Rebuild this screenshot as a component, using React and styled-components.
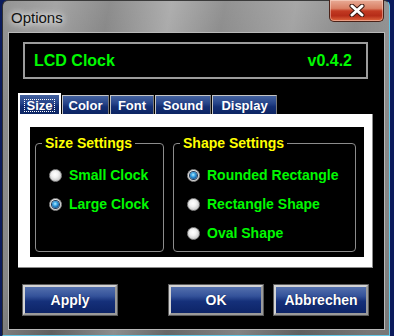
import React from "react";
import styled, { createGlobalStyle, css } from "styled-components";

const Global = createGlobalStyle`
  html, body { margin: 0; padding: 0; background: #0b1b5c; }
  body { width: 394px; height: 336px; overflow: hidden; font-family: "Liberation Sans", Arial, sans-serif; }
  * { box-sizing: border-box; }
`;

const Window = styled.div`
  width: 388px;
  height: 336px;
  margin-left: 2px;
  display: flex;
  flex-direction: column;
  padding: 0 4px 5px 5px;
  border-left: 1px solid #2f2f2f;
  border-top: 1px solid #3a3a3a;
  border-right: 1px solid #62c6e6;
  border-bottom: 1px solid #62c6e6;
  border-radius: 6px 6px 0 0;
  background:
    linear-gradient(100deg, rgba(255,255,255,0.08) 0%, rgba(255,255,255,0.22) 12%, rgba(255,255,255,0.02) 24%, rgba(255,255,255,0.3) 38%, rgba(255,255,255,0.06) 50%, rgba(255,255,255,0.24) 66%, rgba(255,255,255,0.02) 80%, rgba(255,255,255,0.16) 95%),
    linear-gradient(180deg, #8c8c8c 0%, #7a7a7a 30%, #6c6c6c 70%, #5c5c5c 100%);
`;

const TitleBar = styled.div`
  height: 31px;
  display: flex;
  justify-content: space-between;
  align-items: flex-start;
`;

const Title = styled.div`
  padding: 8px 0 0 3px;
  font-size: 15px;
  line-height: 17px;
  color: #111;
  text-shadow: 0 0 6px rgba(255,255,255,0.95), 0 0 10px rgba(255,255,255,0.8);
`;

const CloseButton = styled.div`
  width: 55px;
  height: 22px;
  margin-top: -1px;
  margin-right: 1px;
  border: 1px solid #4a2218;
  border-top: none;
  border-radius: 0 0 5px 5px;
  background: linear-gradient(180deg, #e8ab96 0%, #d97f64 40%, #c23a22 52%, #b52c18 75%, #e0683f 100%);
  box-shadow: inset 0 0 0 1px rgba(255,230,220,0.45);
  display: flex;
  align-items: center;
  justify-content: center;
`;

const Client = styled.div`
  height: 298px;
  background: #000;
  border: 1px solid #b8b8b8;
  display: flex;
  flex-direction: column;
  padding: 9px 0 0 9px;
`;

const Lcd = styled.div`
  width: 345px;
  height: 37px;
  margin-left: 5px;
  border: 2px solid #9c9c9c;
  display: flex;
  align-items: center;
  justify-content: space-between;
  padding: 0 14px 0 9px;
  color: #00fa00;
  font-weight: bold;
  font-size: 16px;
`;

const TabRow = styled.div`
  margin-top: 14px;
  height: 21px;
  display: flex;
  align-items: flex-end;
  gap: 1px;
`;

const Tab = styled.div`
  width: ${(p) => p.$w}px;
  height: 19px;
  display: flex;
  align-items: center;
  justify-content: center;
  color: #fff;
  font-weight: bold;
  font-size: 13px;
  background: linear-gradient(180deg, #44629f 0%, #27458a 40%, #142f74 60%, #0c2463 100%);
  border: 1px solid #c4c4c4;
  border-bottom: none;
  border-right-color: #7a7a7a;
  ${(p) =>
    p.$active &&
    css`
      height: 21px;
      border: 2px solid #fff;
      border-bottom: none;
      padding-top: 1px;
    `}
`;

const Focus = styled.span`
  border: 1px dotted #fff;
  padding: 0 1px;
  line-height: 11px;
`;

const Panel = styled.div`
  width: 355px;
  height: 154px;
  background: #fff;
  border-right: 1px solid #8a8a8a;
  border-bottom: 1px solid #8a8a8a;
  padding: 13px 8px 10px 12px;
  display: flex;
`;

const PanelInner = styled.div`
  flex: 1;
  background: #000;
  display: flex;
  gap: 9px;
  padding: 16px 8px 5px 5px;
`;

const Group = styled.div`
  position: relative;
  width: ${(p) => p.$w}px;
  height: 109px;
  border: 1px solid #8c8c8c;
  border-radius: 4px;
  display: flex;
  flex-direction: column;
  gap: 13px;
  padding: 23px 0 0 13px;
`;

const GroupTitle = styled.div`
  position: absolute;
  top: -9px;
  left: 6px;
  padding: 0 3px;
  background: #000;
  color: #ffff00;
  font-weight: bold;
  font-size: 14px;
  line-height: 16px;
`;

const RadioRow = styled.div`
  height: 16px;
  display: flex;
  align-items: center;
  gap: 7px;
  color: #00fa00;
  font-weight: bold;
  font-size: 14px;
  white-space: nowrap;
`;

const RadioDot = styled.span`
  position: relative;
  width: 13px;
  height: 13px;
  flex: none;
  border-radius: 50%;
  border: 1px solid #8a8a8a;
  background: radial-gradient(circle at 45% 40%, #ffffff 0%, #f2f2f2 35%, #c9c9c9 75%, #a9a9a9 100%);
  ${(p) =>
    p.$checked &&
    css`
      &::after {
        content: "";
        position: absolute;
        left: 2px;
        top: 2px;
        width: 7px;
        height: 7px;
        border-radius: 50%;
        background: radial-gradient(circle at 45% 40%, #b8ecff 0%, #3aa6e6 35%, #1563a6 65%, #0a2c52 100%);
        box-shadow: 0 0 0 1px #203a58;
      }
    `}
`;

const ButtonRow = styled.div`
  margin-top: 17px;
  padding-left: 5px;
  display: flex;
`;

const Button = styled.button`
  width: 94px;
  height: 30px;
  margin-left: ${(p) => p.$ml || 0}px;
  padding: 0;
  border: 2px solid #d4d4d4;
  border-right-color: #9a9a9a;
  border-bottom-color: #9a9a9a;
  box-shadow: 0 0 0 1px #5c5c5c;
  background: linear-gradient(180deg, #5470ad 0%, #34529a 35%, #15307a 55%, #0d2467 100%);
  color: #fff;
  font-family: "Liberation Sans", Arial, sans-serif;
  font-weight: bold;
  font-size: 14px;
  text-shadow: 0 0 1px #001040;
`;

const CloseIcon = () => (
  <svg width="16" height="13" viewBox="0 0 16 13">
    <path d="M3 2 L13 11 M13 2 L3 11" stroke="#3a1810" strokeWidth="5" strokeLinecap="round" />
    <path d="M3 2 L13 11 M13 2 L3 11" stroke="#ffffff" strokeWidth="3" strokeLinecap="round" />
  </svg>
);

const Radio = ({ checked, children }) => (
  <RadioRow>
    <RadioDot $checked={checked} />
    {children}
  </RadioRow>
);

export default function App() {
  return (
    <>
      <Global />
      <Window>
        <TitleBar>
          <Title>Options</Title>
          <CloseButton>
            <CloseIcon />
          </CloseButton>
        </TitleBar>
        <Client>
          <Lcd>
            <span>LCD Clock</span>
            <span>v0.4.2</span>
          </Lcd>
          <TabRow>
            <Tab $w={43} $active>
              <Focus>Size</Focus>
            </Tab>
            <Tab $w={47}>Color</Tab>
            <Tab $w={44}>Font</Tab>
            <Tab $w={56}>Sound</Tab>
            <Tab $w={65}>Display</Tab>
          </TabRow>
          <Panel>
            <PanelInner>
              <Group $w={129}>
                <GroupTitle>Size Settings</GroupTitle>
                <Radio>Small Clock</Radio>
                <Radio checked>Large Clock</Radio>
              </Group>
              <Group $w={183}>
                <GroupTitle>Shape Settings</GroupTitle>
                <Radio checked>Rounded Rectangle</Radio>
                <Radio>Rectangle Shape</Radio>
                <Radio>Oval Shape</Radio>
              </Group>
            </PanelInner>
          </Panel>
          <ButtonRow>
            <Button>Apply</Button>
            <Button $ml={52}>OK</Button>
            <Button $ml={11}>Abbrechen</Button>
          </ButtonRow>
        </Client>
      </Window>
    </>
  );
}
